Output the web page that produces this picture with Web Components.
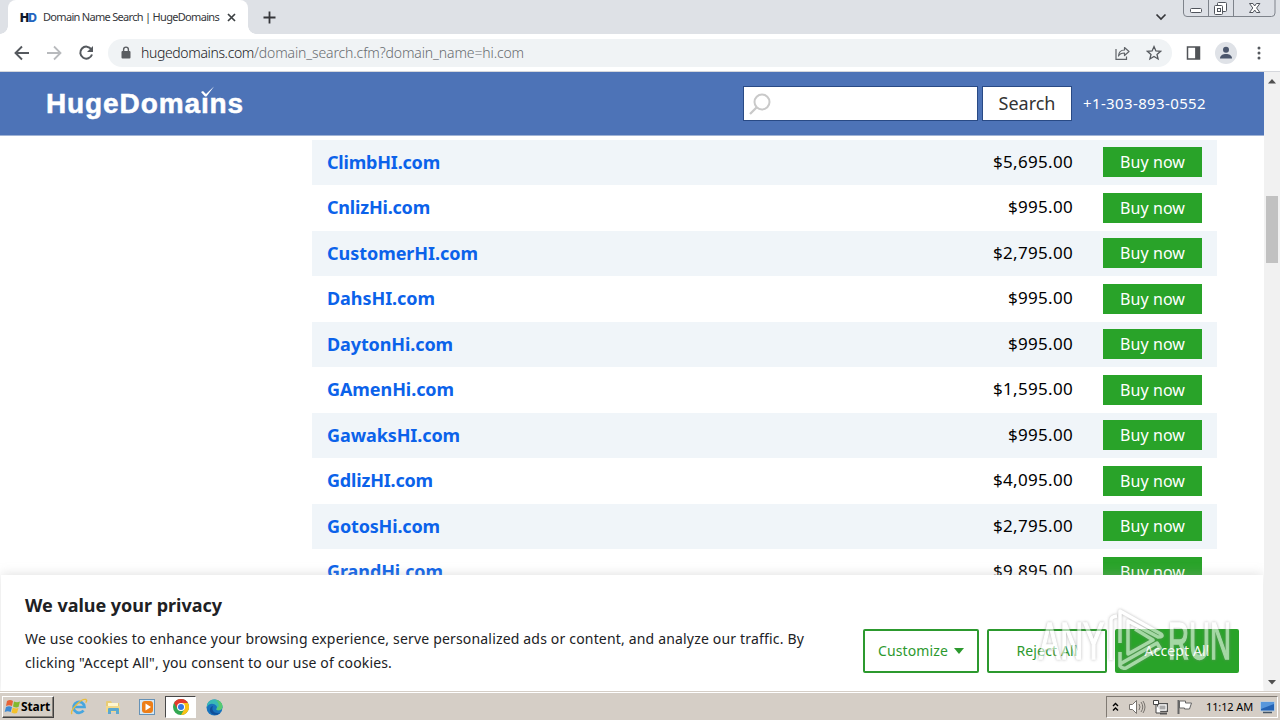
<!DOCTYPE html>
<html lang="en">
<head>
<meta charset="utf-8">
<title>Domain Name Search | HugeDomains</title>
<style>
html,body{margin:0;height:100%;overflow:hidden}
body{font-family:"Noto Sans",sans-serif;background:#fff}
</style>
</head>
<body>
<desktop-screen></desktop-screen>
<script>
function define(name, html, setup) {
  customElements.define(name, class extends HTMLElement {
    connectedCallback() {
      if (this.shadowRoot) return;
      const root = this.attachShadow({ mode: 'open' });
      root.innerHTML = typeof html === 'function' ? html(this) : html;
      if (setup) setup(this, root);
    }
  });
}

/* Text tracked to an exact advance width */
define('fit-text', `<style>:host{display:inline-block;white-space:pre}span{display:inline-block}</style><span><slot></slot></span>`, (host, root) => {
  const span = root.querySelector('span');
  const width = span.getBoundingClientRect().width;
  const target = +host.getAttribute('w');
  host.style.width = target + 'px';
  span.style.letterSpacing = (target - width) / host.textContent.length + 'px';
});

define('window-controls', `<style>:host{display:block;width:94px;height:17px}svg{display:block}</style>
<svg width="94" height="17" fill="none">
<path d="M.5 0v13q0 3.500 3.500 3.500h84.500q3.500 0 3.500-3.500V0" fill="#dde0e6" stroke="#7e838b"/>
<path d="M25.500 0v16M50.500 0v16" stroke="#7e838b"/>
<rect x="7.500" y="8.500" width="11" height="4" rx="1" fill="#fff" stroke="#50545c"/>
<rect x="34.500" y="2.500" width="9" height="9" rx="1" fill="#fff" stroke="#50545c"/>
<rect x="31.500" y="5.500" width="8" height="9" rx="1" fill="#fff" stroke="#50545c"/><rect x="34.500" y="8.500" width="3" height="3" stroke="#50545c"/>
<path d="M66.500 3.500h3.500l1.700 2.500 1.700-2.500h3.500l-3.300 4.500 3.300 4.500h-3.500l-1.700-2.500-1.700 2.500h-3.500l3.300-4.500z" fill="#fff" stroke="#50545c"/>
</svg>`);

define('tab-strip', `<style>
:host{display:flex;height:34px;background:#dee1e6;font-size:11px;color:#35363a}
.tab{position:relative;display:flex;align-items:center;width:240px;margin-left:8px;background:#fff;border-radius:8px 8px 0 0;box-sizing:border-box;padding-left:12px}
.tab:before,.tab:after{content:"";position:absolute;bottom:0;width:8px;height:8px}
.tab:before{left:-8px;background:radial-gradient(circle at 0 0,transparent 7.500px,#fff 8px)}
.tab:after{right:-8px;background:radial-gradient(circle at 100% 0,transparent 7.500px,#fff 8px)}
.hd{font:900 12px Inter,sans-serif;width:16px;margin-right:7px;color:#10182c}.hd b{color:#2465c0;font-weight:800}
.title{margin-bottom:1px}
.close{margin-left:7px}.plus{margin:10px 0 0 14px}.chev{margin:13px 16px 0 auto}
window-controls{margin-right:3px}
</style>
<div class="tab"><fit-text class="hd" w="16">H<b>D</b></fit-text><fit-text class="title" w="176">Domain Name Search | HugeDomains</fit-text>
<svg class="close" width="11" height="11"><path d="M2 2l7 7M9 2l-7 7" stroke="#3c4043" stroke-width="1.700"/></svg></div>
<svg class="plus" width="15" height="15"><path d="M7.500 1.500v12M1.500 7.500h12" stroke="#35363a" stroke-width="1.800"/></svg>
<svg class="chev" width="12" height="9"><path d="M1.500 1.500l4.500 4.500 4.500-4.500" fill="none" stroke="#35363a" stroke-width="1.700"/></svg>
<window-controls></window-controls>`);

define('nav-toolbar', `<style>
:host{display:flex;align-items:center;height:38px;box-sizing:border-box;background:#fff;border-bottom:1px solid #d5d7dc;padding:0 9px 0 10px}
svg{display:block;flex:none}.i{margin-right:8px}
.omni{display:flex;align-items:center;flex:none;width:1064px;height:28px;margin-left:2px;background:#f0f3f5;border-radius:14px;box-sizing:border-box;padding:0 10px 0 12px;font-size:14px;font-weight:300;color:#202124}
.lock{margin-right:9px}.path{color:#686c70}.share{margin-left:auto;margin-right:16px}
.side{margin-left:14px}.av{margin-left:14px}.dots{margin-left:auto;margin-right:10px}
</style>
<svg class="i" width="24" height="24" fill="none" stroke="#55595e" stroke-width="1.900"><path d="M19 12H6M12 5.500L5.500 12l6.500 6.500"/></svg>
<svg class="i" width="24" height="24" fill="none" stroke="#b8babd" stroke-width="1.800"><path d="M5 12h13M12 5.500l6.500 6.500-6.500 6.500"/></svg>
<svg class="i" width="24" height="24"><path d="M17.300 8.300A6 6 0 1 0 18 13.500" fill="none" stroke="#55595e" stroke-width="2"/><path d="M19 5v6h-6z" fill="#55595e"/></svg>
<div class="omni">
<svg class="lock" width="12" height="14"><rect x="1.500" y="5" width="9" height="7.500" rx="1" fill="#5a5d61"/><path d="M3.600 6V3.500a2.400 2.400 0 0 1 4.800 0V6" fill="none" stroke="#5a5d61" stroke-width="1.400"/></svg>
<fit-text w="113">hugedomains.com</fit-text><fit-text class="path" w="270">/domain_search.cfm?domain_name=hi.com</fit-text>
<svg class="share" width="16" height="16" fill="none" stroke="#5f6368" stroke-width="1.200"><path d="M2 4v10.400h10.500v-3"/><path d="M4.500 11c.3-4 2.500-6 6-6V2.500l4.500 4-4.500 4V8c-3 0-4.800.8-6 3z" stroke-linejoin="round"/></svg>
<svg width="16" height="16"><path d="M8 1.600l1.900 4.300 4.700.4-3.600 3.100 1.100 4.600L8 11.500 3.900 14 5 9.400 1.400 6.300l4.700-.4z" fill="none" stroke="#55595e" stroke-width="1.300"/></svg>
</div>
<svg class="side" width="15" height="14"><path d="M1.500 1h12v12h-12zM10 1v12" fill="none" stroke="#505357" stroke-width="1.500"/><path d="M9.500 1h4.500v12h-4.500z" fill="#505357"/></svg>
<svg class="av" width="22" height="22"><circle cx="11" cy="11" r="11" fill="#dfe2e7"/><circle cx="11" cy="7.700" r="3" fill="#4b566c"/><path d="M5 16.500c0-3.300 3-4.500 6-4.500s6 1.200 6 4.500z" fill="#4b566c"/></svg>
<svg class="dots" width="4" height="16" fill="#55595e"><circle cx="2" cy="3" r="1.500"/><circle cx="2" cy="8" r="1.500"/><circle cx="2" cy="13" r="1.500"/></svg>`);

define('site-header', `<style>
:host{display:flex;align-items:center;height:64px;box-sizing:border-box;background:#4d73b7;border-bottom:1px solid #a0b3d5;color:#fff;padding-left:46px;position:relative;z-index:1}
.logo{position:relative;font:700 28px/30px "Liberation Sans",sans-serif;height:30px;-webkit-text-stroke:.5px #fff}
.check{position:absolute;left:154px;top:-3px}
.box{box-sizing:border-box;height:35px;background:#fff;border:1px solid #294a85}
.field{width:235px;margin-left:499px;padding:6px 0 0 5px}
.btn{width:90px;margin:0 11px 0 4px;color:#333;font-size:18px;line-height:33px;text-align:center}
.tel{font-size:15px;margin-bottom:2px}
</style>
<div class="logo"><fit-text w="198">HugeDomaıns</fit-text><svg class="check" width="16" height="12"><path d="M1 6l2-1 3 3 8-7.500-7.500 10H5z" fill="#fff"/></svg></div>
<div class="box field"><svg width="24" height="24" fill="none" stroke="#c9c9c9" stroke-width="2"><circle cx="13" cy="9" r="7.500"/><path d="M7.500 14.500L1 21" stroke-width="2.300"/></svg></div>
<div class="box btn"><fit-text w="57">Search</fit-text></div>
<fit-text class="tel" w="123">+1-303-893-0552</fit-text>`);

define('domain-row', host => `<style>
:host{display:flex;align-items:center;height:45.500px;padding:0 15px;box-sizing:border-box}
:host(:nth-child(odd)){background:linear-gradient(#f0f5f9,#f0f5f9) 0 0/100% 45px no-repeat}
.name{font-weight:700;font-size:18px;color:#0b62ea}
.price{margin:0 30px 2px auto;font-size:17px;color:#000}
.name{margin-bottom:1px}
:host(:nth-child(even)) .name{margin-bottom:2.500px}
:host(:nth-child(even)) .price{margin-bottom:3px}
.buy{width:99px;height:30px;background:#29a329;color:#fff;font-size:16px;line-height:31px;text-align:center;margin-bottom:1px}
</style>
<fit-text class="name" w="${host.getAttribute('w')}">${host.getAttribute('name')}</fit-text>
<fit-text class="price" w="${host.getAttribute('price').length > 7 ? 80 : 65}">${host.getAttribute('price')}</fit-text>
<div class="buy"><fit-text w="65">Buy now</fit-text></div>`);

define('domain-list', () => `<style>:host{display:block;width:905px;margin:4px 0 0 312px}</style><main>` + [
  ['ClimbHI.com', '$5,695.00', 113], ['CnlizHi.com', '$995.00', 103], ['CustomerHI.com', '$2,795.00', 151],
  ['DahsHI.com', '$995.00', 108], ['DaytonHi.com', '$995.00', 126], ['GAmenHi.com', '$1,595.00', 127],
  ['GawaksHI.com', '$995.00', 133], ['GdlizHI.com', '$4,095.00', 106], ['GotosHi.com', '$2,795.00', 113],
  ['GrandHi.com', '$9,895.00', 116]
].map(([n, p, w]) => `<domain-row name="${n}" price="${p}" w="${w}"></domain-row>`).join('') + '</main>');

define('consent-button', `<style>
:host{display:flex;align-items:center;justify-content:center;gap:6px;box-sizing:border-box;height:44px;border:2px solid #2c992e;border-radius:2px;color:#2c992e;font-size:14px;background:#fff;padding-bottom:1px}
:host([solid]){background:#29a329;border-color:#29a329;color:#fff}
</style><slot></slot>`);

define('cookie-banner', `<style>
:host{position:absolute;left:1px;right:1px;bottom:0;height:117px;box-sizing:border-box;background:#fff;box-shadow:0 -1px 10px rgba(172,171,171,.35);z-index:2;display:flex;color:#202124;padding-left:24px}
.copy{width:838px;font-size:14px;line-height:24px;padding-top:18px}
h2{margin:0 0 10px;font-size:18px;line-height:24px}
p{margin:0}
.acts{display:flex;gap:8px;padding-top:54px}
.a{width:116px}.b{width:120px}.c{width:124px}
fit-text{vertical-align:top}
</style>
<div class="copy"><h2><fit-text w="197">We value your privacy</fit-text></h2>
<p><fit-text w="779">We use cookies to enhance your browsing experience, serve personalized ads or content, and analyze our traffic. By</fit-text><br><fit-text w="367">clicking "Accept All", you consent to our use of cookies.</fit-text></p></div>
<div class="acts"><consent-button class="a"><fit-text w="70">Customize</fit-text><svg width="10" height="6"><path d="M0 0h10L5 6z" fill="#2c992e"/></svg></consent-button>
<consent-button class="b"><fit-text w="61">Reject All</fit-text></consent-button>
<consent-button class="c" solid><fit-text w="65">Accept All</fit-text></consent-button></div>`);

define('brand-watermark', `<style>
:host{position:absolute;left:1039px;top:606px;width:200px;height:70px;z-index:5;display:flex;align-items:center;opacity:.58;color:#fff;filter:drop-shadow(0 0 1.500px #888);font:400 52px/70px "Liberation Sans",sans-serif;-webkit-text-stroke:1.600px #fff}
.t{transform-origin:0 50%;white-space:pre}
.l{width:68px}.l .t{transform:scaleX(.61)}.r .t{transform:scaleX(.56)}
svg{flex:none;margin-right:1px}
</style>
<div class="l"><div class="t">ANY</div></div>
<svg width="60" height="70" fill="none" stroke="#fff" stroke-width="3.500" stroke-linejoin="round"><path d="M4 54V14q0-3 6-4M13 37V5L54 28q3 3-3 3L21 15v33l25-14-18-11M13 46v14q2 3 6 2L53 42l-3-5L13 58"/></svg>
<div class="r"><div class="t">RUN</div></div>`);

define('scroll-bar', `<style>
:host{display:flex;flex-direction:column;align-items:center;justify-content:space-between;width:16px;height:620px;background:#f1f1f1;padding:7px 0;box-sizing:border-box}
.thumb{width:12px;height:67px;background:#c1c1c1;margin:112px 0 auto}
</style><svg width="8" height="5"><path d="M0 4.500L4 0l4 4.500z" fill="#505050"/></svg><div class="thumb"></div>
<svg width="8" height="5"><path d="M0 0h8L4 4.500z" fill="#505050"/></svg>`);

define('task-bar', `<style>
:host{display:flex;align-items:center;height:28px;box-sizing:border-box;background:#d5cec6;border-top:1px solid #fff;box-shadow:0 -1px #d5cec6;font-size:11px;color:#000;padding:1px 2px 0;position:relative;z-index:3}
svg{display:block;flex:none}
.start{display:flex;align-items:center;width:52px;height:22px;box-sizing:border-box;border:1px solid;border-color:#fff #404040 #404040 #fff;box-shadow:inset -1px -1px #87817a;padding-left:1px;font-weight:700;font-size:12px}
.start fit-text,.tray fit-text{margin-bottom:1px}
.ie{margin-left:16px}.folder{margin-left:17px}.play{margin-left:18px}
.chrome{display:flex;align-items:center;justify-content:center;width:31px;height:22px;box-sizing:border-box;border:1px solid;border-color:#484848 #fff #fff #484848;background:#fff;margin:0 10px}
.tray{display:flex;align-items:center;margin-left:auto;width:172px;height:22px;box-sizing:border-box;border:1px solid;border-color:#807a73 #fff #fff #807a73;padding-left:5px}
</style>
<div class="start"><svg width="17" height="18"><path d="M3 3q3-2 6 0L8 8Q5 6.500 2 8z" fill="#e76336"/><path d="M10 3.500q3 1.500 6 0L14.500 9Q12 10 9 8.500z" fill="#82b92d"/><path d="M2 9q3-1.500 6 0l-1.300 5q-3-1.500-6 0z" fill="#3e8ad3"/><path d="M8.800 9.500q3 1.500 5.700.5L13 15q-2.500 1-5.500-.5z" fill="#f4c12b"/></svg><fit-text w="29">Start</fit-text></div>
<svg class="ie" width="18" height="18" fill="none"><path d="M13.500 12.500A5.500 5.500 0 1 1 14.500 9H4.500" stroke="#47a6df" stroke-width="2.700"/><path d="M2 16C-.5 13 11 0 16 1.500c1.300.7.500 2-.3 3.200" stroke="#e8bd3d" stroke-width="1.400"/></svg>
<svg class="folder" width="16" height="16"><path d="M1 3q0-1 1-1h4l1 2h7v9H1z" fill="#e8cc75"/><path d="M3 4h10v4H3z" fill="#fff6cf"/><path d="M1 7h14v6H1z" fill="#f2d98a"/><path d="M3 15v-5q0-1 1-1h9q1 0 1 1v5h-3v-3H6v3z" fill="#5ca8cf"/></svg>
<svg class="play" width="16" height="16"><rect x=".5" y=".5" width="15" height="15" fill="#d5e8f5" stroke="#6692b6"/><rect x="3" y="2" width="11" height="12" rx="3" fill="#ed7e17"/><path d="M6.500 4.500v7L12 8z" fill="#fff"/></svg>
<div class="chrome"><svg width="16" height="16"><circle cx="8" cy="8" r="8" fill="#33a852"/><path d="M1.070 4A8 8 0 0 1 14.930 4H8L4.540 10z" fill="#e53a2e"/><path d="M14.930 4A8 8 0 0 1 8 16l3.460-6L8 4z" fill="#fbc116"/><circle cx="8" cy="8" r="4" fill="#fff"/><circle cx="8" cy="8" r="3" fill="#3478e5"/></svg></div>
<svg width="17" height="17"><circle cx="8.500" cy="8.500" r="8" fill="#1873bd"/><path d="M1 6C3-2 15-1 16.500 7c.3 3-2 5-5.500 4-2-.5 1-2-.5-4C8 4 3 4 1 8z" fill="#39b9b6"/><path d="M10 1c4 .5 6.300 3 6.500 6 .3 3-2 5-5.500 4-1-.5 0-1.500 0-2.500 2 0 3-3-1-7.500z" fill="#57ca72"/><path d="M7 7c-2 4 1 8 7 7-4 4-11 1-10-4 .4-2 2-3 3-3z" fill="#104f99"/></svg>
<div class="tray"><svg width="8" height="10" fill="none" stroke="#000" stroke-width="1.400"><path d="M1 4l2.500-2.500L6 4M1 8.500L3.500 6 6 8.500"/></svg>
<svg style="margin-left:8px" width="18" height="16" fill="none" stroke="#77736e"><path d="M1.500 5.500h3l4-4v13l-4-4h-3z" fill="#fff"/><path d="M11 5q2 3 0 6M13 3q3.500 5 0 10M15 2q4 6 0 12"/></svg>
<svg style="margin-left:6px" width="18" height="16"><rect x="5.500" y="4.500" width="10" height="8" fill="#bbb" stroke="#555"/><path d="M7 6h7v5H7z" fill="#aaa" stroke="#fff"/><path d="M8 14.500h7" stroke="#555" stroke-width="2"/><path d="M1.500 1.500h5v4h-5zM4 5v9h5" fill="#fff" stroke="#444"/></svg>
<svg style="margin-left:6px" width="18" height="16"><path d="M2.500 1v14" stroke="#666" stroke-width="2"/><path d="M3.500 2h6v2h6l-2 6H8.500V9h-5z" fill="#fff" stroke="#666"/></svg>
<fit-text style="margin-left:12px" w="47">11:12 AM</fit-text>
<svg style="margin-left:7px" width="16" height="14"><path d="M.5 2h14v9H.5z" fill="#2463b4" stroke="#b3cde4"/><path d="M1 2h13v2L1 9z" fill="#5797dc"/><path d="M3 12.500h9" stroke="#456" stroke-width="1.500"/></svg></div>`);

define('web-page', `<style>
:host{display:flex;height:620px;overflow:hidden}
.view{position:relative;width:1264px;height:620px;overflow:hidden;background:#fff}
</style><div class="view"><site-header></site-header><domain-list></domain-list><cookie-banner></cookie-banner></div><scroll-bar></scroll-bar>`);

define('desktop-screen', `<style>
:host{display:flex;flex-direction:column;position:relative;width:1280px;height:720px;overflow:hidden;background:#fff}
tab-strip,nav-toolbar,web-page,task-bar{flex:none}
</style><tab-strip></tab-strip><nav-toolbar></nav-toolbar><web-page></web-page><task-bar></task-bar><brand-watermark></brand-watermark>`);
</script>
</body>
</html>
